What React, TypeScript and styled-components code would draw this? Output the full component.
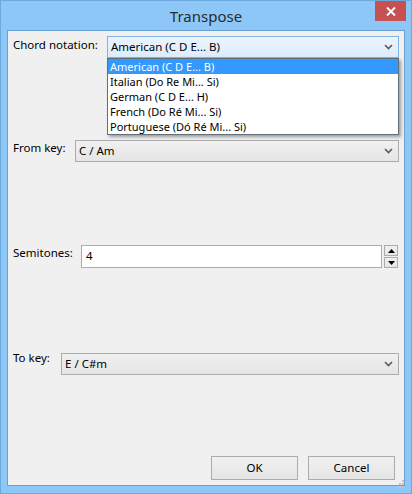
import styled, { createGlobalStyle } from "styled-components";

const GlobalStyle = createGlobalStyle`
  html, body {
    margin: 0;
    padding: 0;
    background: #ffffff;
  }
  body {
    font-family: "Segoe UI", "Noto Sans", "Open Sans", sans-serif;
    font-size: 11.5px;
    color: #000;
  }
`;

const notations = [
  "American (C D E... B)",
  "Italian (Do Re Mi... Si)",
  "German (C D E... H)",
  "French (Do Ré Mi... Si)",
  "Portuguese (Dó Ré Mi... Si)",
];

function Chevron() {
  return (
    <svg width="9" height="6" viewBox="0 0 9 6">
      <path d="M1 1 L4.5 4.5 L8 1" fill="none" stroke="#5a5a5a" strokeWidth="1.6" />
    </svg>
  );
}

function Combo({ value, focused }: { value: string; focused?: boolean }) {
  return (
    <ComboBox $focused={focused}>
      <ComboText>{value}</ComboText>
      <Chevron />
    </ComboBox>
  );
}

export default function App() {
  return (
    <>
      <GlobalStyle />
      <Window>
        <TitleBar>
          <span />
          <Title>Transpose</Title>
          <CloseButton>
            <svg width="10" height="9" viewBox="0 0 10 9">
              <path d="M1 0.5 L9 8.5 M9 0.5 L1 8.5" stroke="#fff" strokeWidth="2" />
            </svg>
          </CloseButton>
        </TitleBar>
        <Client>
          <Row $mt={5}>
            <Label $w={94} $pt={1}>Chord notation:</Label>
            <Field>
              <Combo value="American (C D E... B)" focused />
              <DropList>
                {notations.map((n, i) => (
                  <DropItem key={n} $selected={i === 0}>
                    {n}
                  </DropItem>
                ))}
              </DropList>
            </Field>
          </Row>

          <Row $mt={82}>
            <Label $w={62} $pt={0}>From key:</Label>
            <Field>
              <Combo value="C / Am" />
            </Field>
          </Row>

          <Row $mt={83}>
            <Label $w={68} $pt={0}>Semitones:</Label>
            <Field>
              <SpinRow>
                <TextInput>4</TextInput>
                <Spinner>
                  <SpinButton>
                    <svg width="7" height="4" viewBox="0 0 7 4">
                      <path d="M0 4 L3.5 0 L7 4 Z" fill="#000" />
                    </svg>
                  </SpinButton>
                  <SpinButton>
                    <svg width="7" height="4" viewBox="0 0 7 4">
                      <path d="M0 0 L3.5 4 L7 0 Z" fill="#000" />
                    </svg>
                  </SpinButton>
                </Spinner>
              </SpinRow>
            </Field>
          </Row>

          <Row $mt={82}>
            <Label $w={48} $pt={0}>To key:</Label>
            <Field $mt={3}>
              <Combo value="E / C#m" />
            </Field>
          </Row>

          <ButtonBar>
            <Button>OK</Button>
            <Button>Cancel</Button>
          </ButtonBar>
          <SizeGrip>
            <svg width="9" height="9" viewBox="0 0 9 9">
              {[
                [6, 0],
                [3, 3],
                [6, 3],
                [0, 6],
                [3, 6],
                [6, 6],
              ].map(([x, y]) => (
                <rect key={`${x}-${y}`} x={x + 1} y={y + 1} width="2" height="2" fill="#c2c2c2" />
              ))}
            </svg>
          </SizeGrip>
        </Client>
      </Window>
    </>
  );
}

const Window = styled.div`
  box-sizing: border-box;
  width: 412px;
  height: 494px;
  background: #8dc7f8;
  border: 1px solid #6fa8dc;
  display: flex;
  flex-direction: column;
`;

const TitleBar = styled.div`
  height: 29px;
  display: grid;
  grid-template-columns: 1fr auto 1fr;
  align-items: center;
`;

const Title = styled.div`
  font-size: 15px;
  color: #2b2b2b;
  padding-top: 1px;
`;

const CloseButton = styled.div`
  justify-self: end;
  align-self: start;
  margin-right: 5px;
  width: 31px;
  height: 20px;
  background: #c75050;
  display: flex;
  align-items: center;
  justify-content: center;
`;

const Client = styled.div`
  position: relative;
  flex: 1;
  margin: 0 6px 7px 6px;
  border: 1px solid #6d9fd0;
  background: #f0f0f0;
  display: flex;
  flex-direction: column;
  padding: 0 5px 0 5px;
`;

const Row = styled.div<{ $mt: number }>`
  display: flex;
  align-items: flex-start;
  margin-top: ${(p) => p.$mt}px;
`;

const Label = styled.div<{ $w: number; $pt: number }>`
  width: ${(p) => p.$w}px;
  flex-shrink: 0;
  padding-top: ${(p) => p.$pt}px;
  line-height: 16px;
  white-space: nowrap;
`;

const Field = styled.div<{ $mt?: number }>`
  position: relative;
  flex: 1;
  margin-top: ${(p) => p.$mt ?? 0}px;
`;

const ComboBox = styled.div<{ $focused?: boolean }>`
  box-sizing: border-box;
  height: 22px;
  display: flex;
  align-items: center;
  padding: 0 5px 0 3px;
  border: 1px solid ${(p) => (p.$focused ? "#7eb4ea" : "#acacac")};
  background: ${(p) =>
    p.$focused
      ? "linear-gradient(#ecf4fc, #dcecfc)"
      : "linear-gradient(#f0f0f0, #e5e5e5)"};
`;

const ComboText = styled.span`
  flex: 1;
  line-height: 16px;
  white-space: nowrap;
`;

const DropList = styled.div`
  position: absolute;
  top: 22px;
  left: 0;
  right: 0;
  box-sizing: border-box;
  border: 1px solid #646f7c;
  background: #ffffff;
  box-shadow: 2px 2px 3px rgba(0, 0, 0, 0.35);
  z-index: 2;
`;

const DropItem = styled.div<{ $selected?: boolean }>`
  height: 15px;
  line-height: 15px;
  font-size: 11px;
  padding-left: 2px;
  white-space: nowrap;
  background: ${(p) => (p.$selected ? "#3399ff" : "transparent")};
  color: ${(p) => (p.$selected ? "#ffffff" : "#000000")};
`;

const SpinRow = styled.div`
  display: flex;
  gap: 2px;
`;

const TextInput = styled.div`
  box-sizing: border-box;
  flex: 1;
  height: 23px;
  border: 1px solid #abadb3;
  background: #ffffff;
  padding: 2px 0 0 4px;
  line-height: 16px;
`;

const Spinner = styled.div`
  display: flex;
  flex-direction: column;
  gap: 1px;
  margin-right: 1px;
`;

const SpinButton = styled.div`
  box-sizing: border-box;
  width: 14px;
  height: 11px;
  border: 1px solid #acacac;
  background: linear-gradient(#f0f0f0, #e5e5e5);
  display: flex;
  align-items: center;
  justify-content: center;
`;

const ButtonBar = styled.div`
  margin-top: auto;
  display: flex;
  justify-content: flex-end;
  gap: 10px;
  padding: 0 4px 5px 0;
`;

const Button = styled.div`
  box-sizing: border-box;
  width: 87px;
  height: 24px;
  border: 1px solid #acacac;
  background: linear-gradient(#f0f0f0, #e5e5e5);
  display: flex;
  align-items: center;
  justify-content: center;
  line-height: 16px;
`;

const SizeGrip = styled.div`
  position: absolute;
  right: 0;
  bottom: 0;
  width: 9px;
  height: 9px;
`;
